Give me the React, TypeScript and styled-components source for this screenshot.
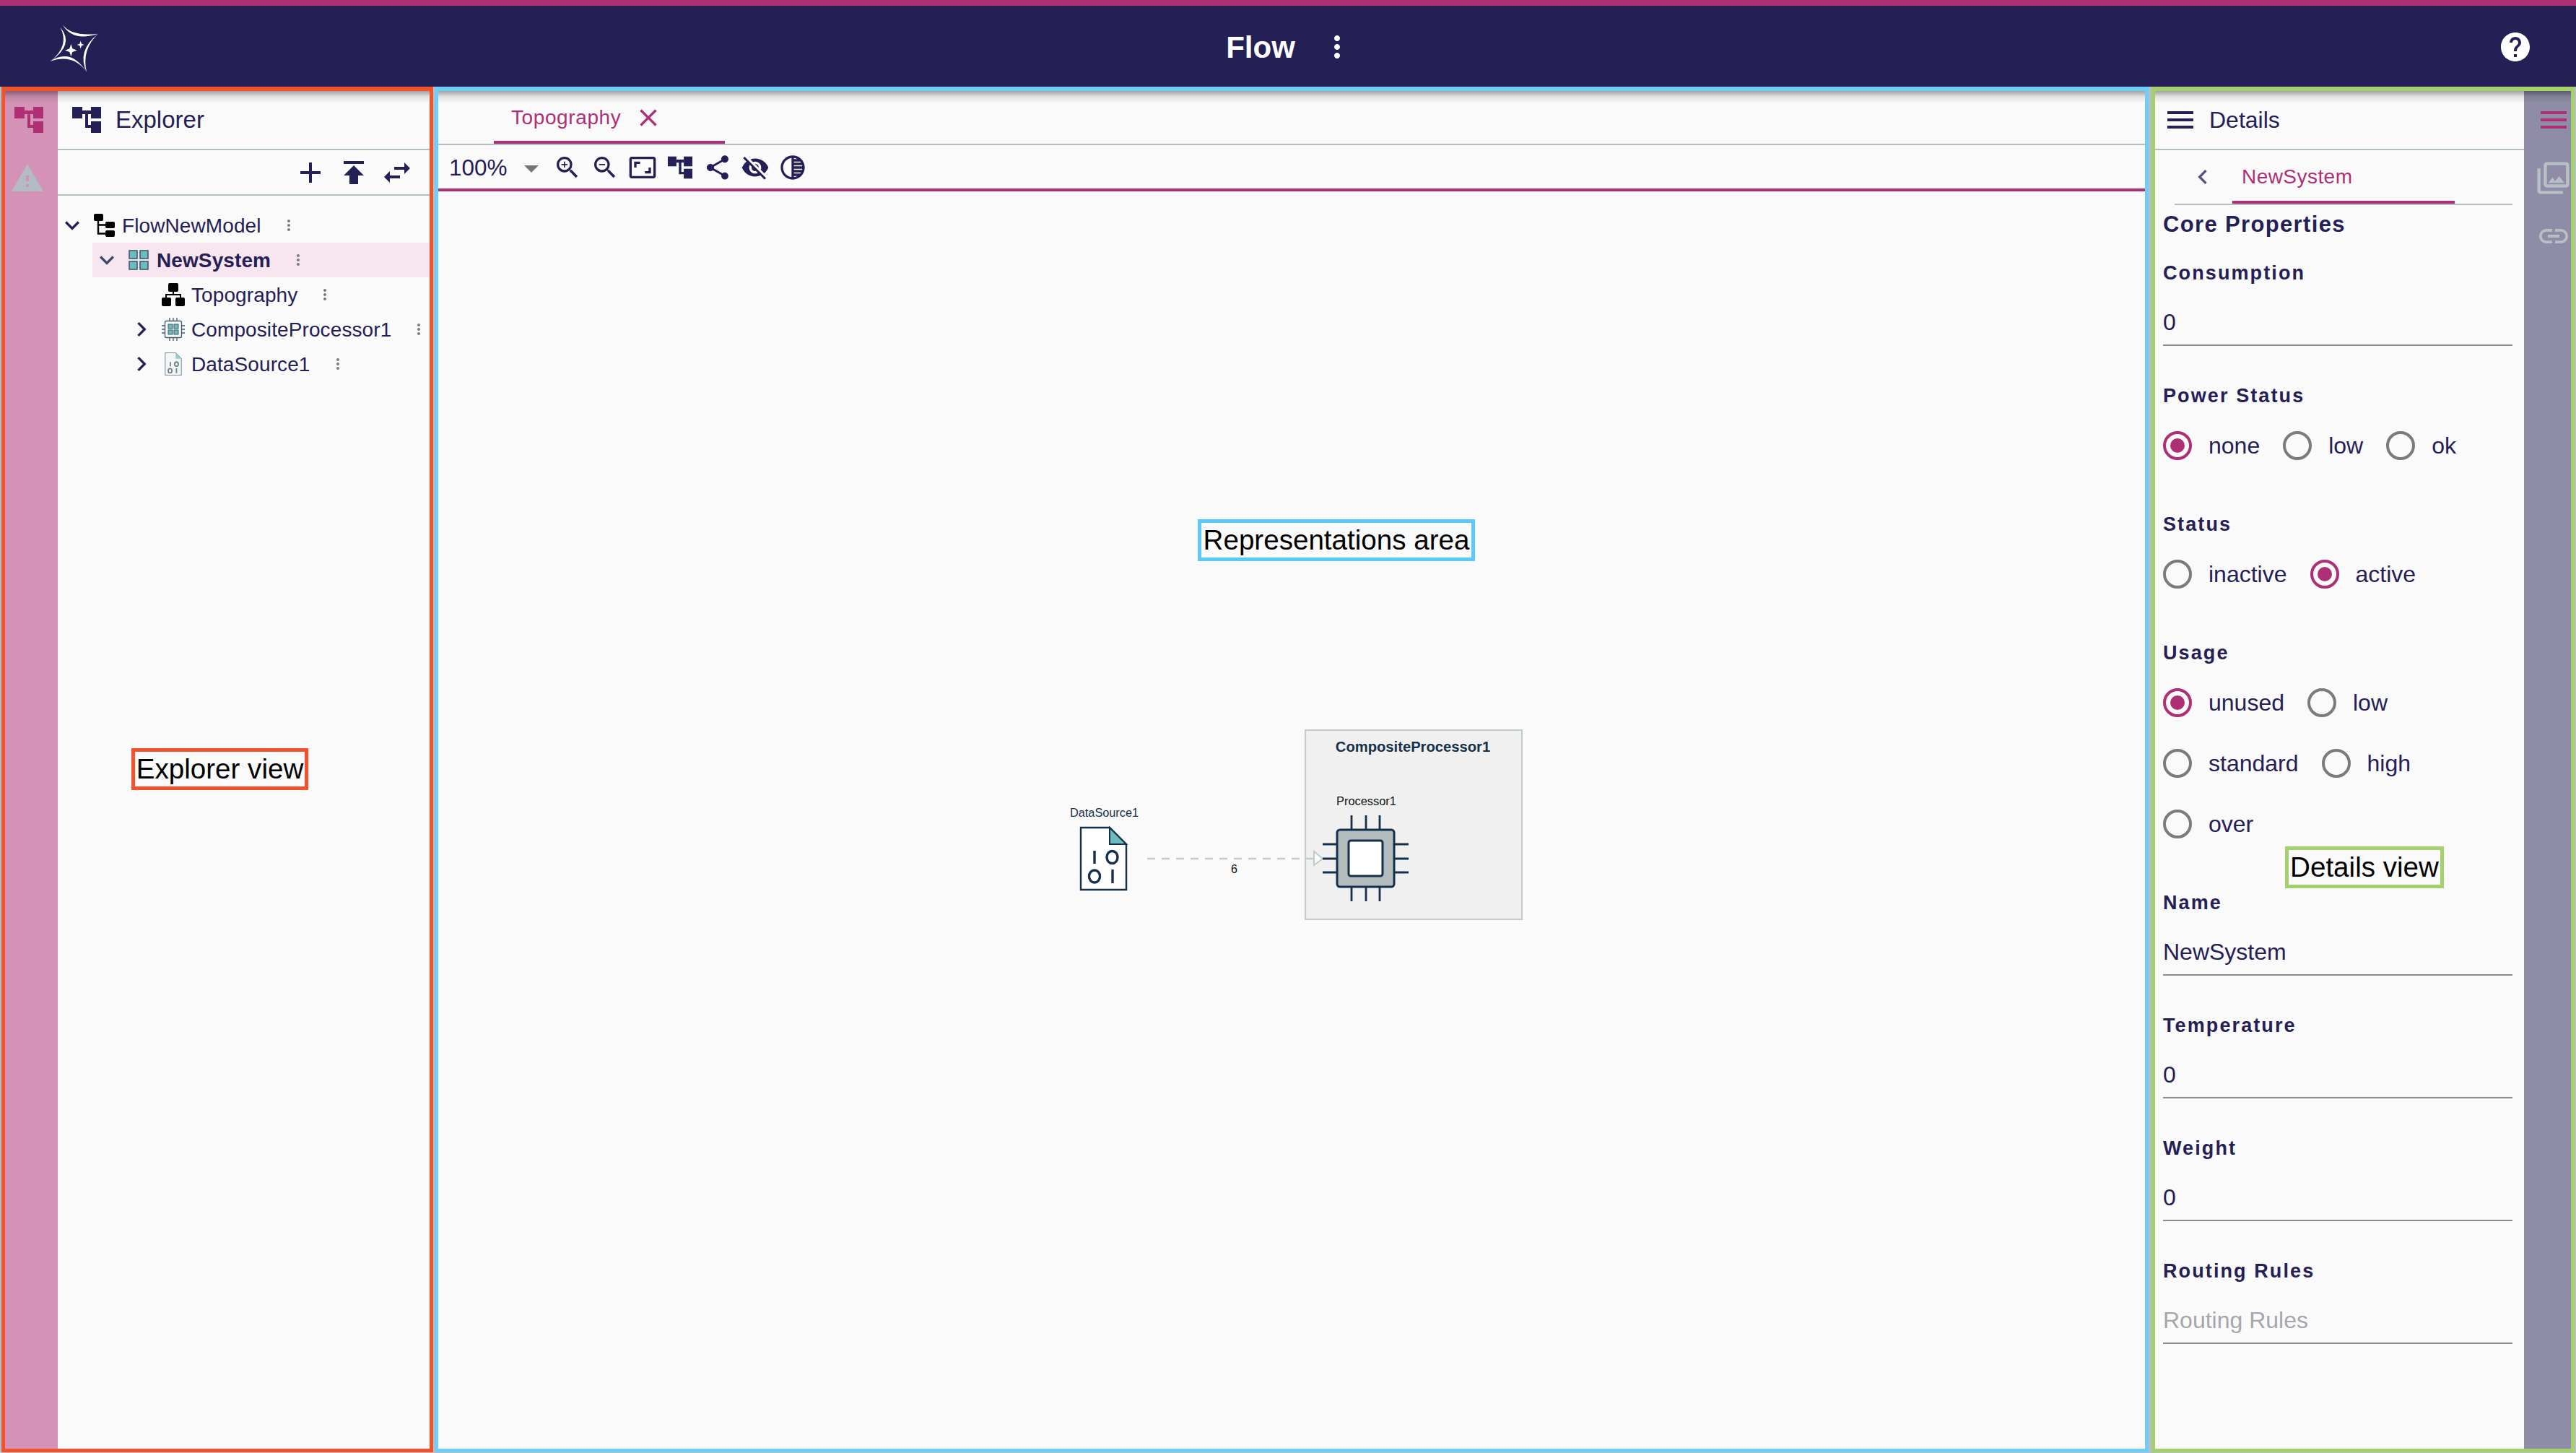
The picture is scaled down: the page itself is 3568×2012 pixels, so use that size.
import React from "react";
import styled, { createGlobalStyle } from "styled-components";
import {
  MdAdd, MdPublish, MdSwapHoriz, MdMoreVert, MdExpandMore, MdChevronRight, MdChevronLeft, MdClose,
  MdZoomIn, MdZoomOut, MdAspectRatio, MdShare, MdVisibilityOff, MdTonality, MdMenu, MdHelp, MdWarning,
  MdOutlinePhotoLibrary, MdLink,
} from "react-icons/md";

const NAVY = "#242056";
const MAGENTA = "#ae2f75";
const LINE = "#b3bfc1";
const PAPER = "#fafafa";

const Global = createGlobalStyle`
  html, body { margin: 0; padding: 0; width: 3568px; height: 2012px; overflow: hidden; background: ${PAPER}; }
  body { font-family: "Liberation Sans", Arial, sans-serif; color: ${NAVY}; }
  * { box-sizing: border-box; }
`;

const Page = styled.div`
  position: relative; width: 3568px; height: 2012px; display: flex; flex-direction: column;
`;
const AppBar = styled.header`
  height: 120px; flex: none; background: ${NAVY}; border-top: 8px solid #ae3074;
  display: grid; grid-template-columns: 1fr auto 1fr; align-items: center; padding: 0 60px; color: #fff;
`;
const LogoBox = styled.div`display: flex; margin-top: 12px;`;
const TitleGroup = styled.div`display: flex; align-items: center; gap: 34px; margin-left: 6px; padding-top: 2px;`;
const AppTitle = styled.span`font-size: 42px; font-weight: 700; line-height: 48px; padding-top: 2px;`;
const HelpBox = styled.div`justify-self: end; display: flex; padding-top: 2px;`;

const Main = styled.main`
  flex: 1; display: flex; background: #b8bfc2; padding: 0 2px 1px 2px; min-height: 0;
`;
const Panel = styled.section<{ $color: string; $width: number; $gap?: number }>`
  position: relative; width: ${(p) => p.$width}px; flex: none; margin-right: ${(p) => p.$gap ?? 0}px;
  display: flex; background: ${PAPER};
  border: 5px solid ${(p) => p.$color}; border-top-width: 6px;
  &::before {
    content: ""; position: absolute; left: 0; right: 0; top: 0; height: 17px; pointer-events: none; z-index: 2;
    background: linear-gradient(to bottom, rgba(0,0,0,.36), rgba(0,0,0,.1) 45%, rgba(0,0,0,0));
  }
`;
const LeftRail = styled.nav`
  width: 73px; flex: none; background: #d392b6; display: flex; flex-direction: column; align-items: center;
  padding: 22px 7px 0 0; gap: 39px;
`;
const RailWarning = styled.div`display: flex; margin-left: -4px; color: #b3bcc3;`;
const RightRail = styled.nav`
  width: 65px; flex: none; background: #8f8ca8; display: flex; flex-direction: column; align-items: center;
  padding: 16px 0 0 16px; gap: 30px; color: #b7c0c4;
`;
const PanelBody = styled.div`flex: 1; min-width: 0; display: flex; flex-direction: column;`;
const PanelHeader = styled.div<{ $pad: number; $gap: number; $size: number }>`
  height: 82px; flex: none; display: flex; align-items: center; border-bottom: 2px solid ${LINE};
  padding-left: ${(p) => p.$pad}px; gap: ${(p) => p.$gap}px; font-size: ${(p) => p.$size}px;
`;
const ExplorerTools = styled.div`
  height: 63px; flex: none; display: flex; align-items: center; justify-content: flex-end; gap: 12px;
  padding-right: 21px; border-bottom: 2px solid ${LINE};
`;
const Tree = styled.div`padding-top: 17px; display: flex; flex-direction: column;`;
const TreeRow = styled.div<{ $level: number; $selected?: boolean }>`
  height: 48px; display: flex; align-items: center; font-size: 28px; letter-spacing: 0.1px;
  margin-left: ${(p) => p.$level * 48}px; white-space: nowrap;
  background: ${(p) => (p.$selected ? "#f7e6f0" : "transparent")};
  font-weight: ${(p) => (p.$selected ? 700 : 400)};
`;
const Toggle = styled.span<{ $muted?: boolean }>`
  width: 40px; height: 40px; flex: none; display: flex; color: ${(p) => (p.$muted ? "#3b4a6b" : NAVY)};
`;
const TreeIcon = styled.span`width: 48px; flex: none; display: flex; justify-content: center; align-items: center;`;
const TreeLabel = styled.span`margin-left: 1px; padding-top: 2px;`;
const RowMenu = styled.span`display: flex; margin-left: 26px; color: #7a7a7a;`;

const Center = styled.div`flex: 1; min-width: 0; display: flex; flex-direction: column;`;
const TabBar = styled.div`
  height: 75px; flex: none; padding-left: 77px; border-bottom: 2px solid ${LINE}; display: flex;
`;
const EditorTab = styled.div`
  width: 320px; height: 73px; padding: 5px 0 0 24px; border-bottom: 4px solid ${MAGENTA};
  display: flex; align-items: center; gap: 18px; color: ${MAGENTA}; font-size: 28px; letter-spacing: 0.6px;
`;
const DiagramTools = styled.div`
  height: 64px; flex: none; display: flex; align-items: center; padding: 2px 0 0 15px;
  border-bottom: 4px solid ${MAGENTA}; color: ${NAVY};
`;
const Zoom = styled.span`font-size: 31.5px; width: 80px;`;
const Caret = styled.span`
  width: 0; height: 0; margin: 4px 20px 0 24px; border-left: 10px solid transparent; border-right: 10px solid transparent;
  border-top: 10px solid #757575;
`;
const ToolIcons = styled.div`display: flex; gap: 12px; align-items: center;`;
const ToolIcon = styled.span`width: 40px; height: 40px; display: flex; align-items: center; justify-content: center;`;
const Canvas = styled.div`position: relative; flex: 1;`;
const Diagram = styled.svg`position: absolute; left: 863px; top: 735px;`;
const DiagramText = styled.text<{ $bold?: boolean; $size: number; $fill: string }>`
  font-family: "Liberation Sans", Arial, sans-serif; font-size: ${(p) => p.$size}px;
  font-weight: ${(p) => (p.$bold ? 700 : 400)}; fill: ${(p) => p.$fill};
`;

const DetailTabs = styled.div`
  height: 76px; flex: none; margin: 0 16px 0 27px; padding-left: 19px; border-bottom: 2px solid ${LINE};
  display: flex; align-items: flex-start;
`;
const BackIcon = styled.span`display: flex; color: #55527f; margin-top: 17px;`;
const DetailTab = styled.div`
  width: 308px; height: 74px; margin-left: 21px; padding: 4px 0 0 13px; border-bottom: 4px solid ${MAGENTA};
  display: flex; align-items: center; color: ${MAGENTA}; font-size: 28px; letter-spacing: 0.45px;
`;
const Form = styled.div`padding: 6px 16px 0 11px; display: flex; flex-direction: column;`;
const SectionTitle = styled.h2`
  margin: 0 0 28px; padding-top: 1px; height: 40px; font-size: 31px; line-height: 40px; font-weight: 700; letter-spacing: 1.35px;
`;
const FieldLabel = styled.div`font-size: 27px; line-height: 40px; font-weight: 700; letter-spacing: 2.1px;`;
const TextField = styled.div`margin-bottom: 49px;`;
const TextValue = styled.div<{ $placeholder?: boolean }>`
  padding: 28px 0 11px; font-size: 32px; line-height: 40px; border-bottom: 2px solid #8c8c8c;
  color: ${(p) => (p.$placeholder ? "#a6a6ad" : NAVY)};
`;
const RadioField = styled.div`margin-bottom: 69px;`;
const RadioGroup = styled.div`display: flex; flex-wrap: wrap; column-gap: 32px; row-gap: 44px; margin-top: 29px;`;
const RadioOption = styled.div`display: flex; align-items: center; gap: 23px; font-size: 32px; height: 40px;`;
const RadioMark = styled.span<{ $on?: boolean }>`
  width: 40px; height: 40px; border-radius: 50%; flex: none; display: flex; align-items: center; justify-content: center;
  border: 4.5px solid ${(p) => (p.$on ? MAGENTA : "#7b7b7b")};
  &::after { content: ""; width: 20px; height: 20px; border-radius: 50%; background: ${(p) => (p.$on ? MAGENTA : "transparent")}; }
`;

const Callout = styled.div<{ $color: string; $left: number; $top: number; $width: number }>`
  position: absolute; left: ${(p) => p.$left}px; top: ${(p) => p.$top}px; width: ${(p) => p.$width}px; height: 58px;
  border: 5px solid ${(p) => p.$color}; background: ${PAPER}; color: #000; font-size: 38.6px; line-height: 47px;
  text-align: center; white-space: nowrap; z-index: 3;
`;

const Logo = () => (
  <svg width="90" height="90" viewBox="0 0 270 270" fill="#fff">
    <path d="M80 28 Q118 78 228 65 Q122 100 80 28Z" />
    <path d="M228 65 Q158 130 180 225 Q138 135 228 65Z" />
    <path d="M180 225 Q125 146 28 180 Q115 122 180 225Z" />
    <path d="M28 180 Q112 115 70 38 Q132 110 28 180Z" />
    <path d="M115 108 L121 127 L140 134 L121 141 L115 160 L109 141 L90 134 L109 127Z" />
    <path d="M155 95 L159 107 L170 111 L159 115 L155 127 L151 115 L140 111 L151 107Z" />
  </svg>
);

const StructureIcon = ({ color, width = 40, height = 36 }: { color: string; width?: number; height?: number }) => (
  <svg width={width} height={height} viewBox="0 0 40 36" fill={color}>
    <rect x="0" y="0" width="14" height="16" />
    <rect x="26" y="0" width="14" height="16" />
    <rect x="26" y="20" width="14" height="16" />
    <rect x="14" y="5" width="12" height="5" />
    <path d="M18 8h4v17h5v4h-9z" />
  </svg>
);

const ModelIcon = () => (
  <svg width="29" height="32" viewBox="0 0 29 32">
    <g fill="#000">
      <rect x="0" y="0" width="13" height="10" rx="2" />
      <rect x="16" y="11" width="13" height="9" rx="2" />
      <rect x="16" y="23" width="13" height="9" rx="2" />
    </g>
    <path d="M6 9V27.5H17M6 15.5H17" stroke="#000" strokeWidth="2.4" fill="none" />
  </svg>
);

const SystemIcon = () => (
  <svg width="28" height="28" viewBox="0 0 28 28" fill="#6cbcbc" stroke="#3f5b72" strokeWidth="1.6">
    <rect x="1" y="1" width="11" height="11" />
    <rect x="16" y="1" width="11" height="11" />
    <rect x="1" y="16" width="11" height="11" />
    <rect x="16" y="16" width="11" height="11" />
  </svg>
);

const TopographyIcon = () => (
  <svg width="32" height="32" viewBox="0 0 32 32" fill="#000">
    <rect x="9" y="0" width="14" height="12" rx="2" />
    <rect x="0" y="20" width="13" height="12" rx="2" />
    <rect x="19" y="20" width="13" height="12" rx="2" />
    <path d="M15 11h2v4h10v6h-2v-4H7v4H5v-6h10z" />
  </svg>
);

const ChipTreeIcon = () => (
  <svg width="32" height="32" viewBox="0 0 32 32" fill="none" stroke="#3f5b72" strokeWidth="1.3">
    <rect x="4.5" y="4.5" width="23" height="23" rx="2" fill="#fafafa" />
    <path d="M11 0v4.5M16 0v4.5M21 0v4.5M11 27.5v4.5M16 27.5v4.5M21 27.5v4.5M0 11h4.5M0 16h4.5M0 21h4.5M27.5 11h4.5M27.5 16h4.5M27.5 21h4.5" />
    <g fill="#6cbcbc" strokeWidth="1">
      <rect x="9" y="9" width="6" height="6" />
      <rect x="17" y="9" width="6" height="6" />
      <rect x="9" y="17" width="6" height="6" />
      <rect x="17" y="17" width="6" height="6" />
    </g>
  </svg>
);

const SmallDocIcon = () => (
  <svg width="24" height="32" viewBox="0 0 64 87">
    <g opacity="0.72">
      <path d="M1.5 1.5H41L62.5 24V85.5H1.5Z" fill="#f2f4f4" stroke="#546e7a" strokeWidth="3" />
      <path d="M41 1.5L62.5 24H41Z" fill="#6cbcbc" />
      <g stroke="#3f5566" strokeWidth="5" fill="none">
        <path d="M21 36V52M44 60V78" />
        <ellipse cx="44" cy="44" rx="7" ry="8" />
        <ellipse cx="20" cy="69" rx="7" ry="8" />
      </g>
    </g>
  </svg>
);

const FullDiagram = () => (
  <Diagram width="660" height="290" viewBox="1470 1000 660 290">
    <rect x="1808" y="1011" width="300" height="262" fill="#f0f0f0" stroke="#c3cccd" strokeWidth="2" />
    <DiagramText x="1957" y="1041" textAnchor="middle" $bold $size={20.2} $fill="#15304a">CompositeProcessor1</DiagramText>
    <DiagramText x="1851" y="1115" $size={16.4} $fill="#111">Processor1</DiagramText>
    <DiagramText x="1482" y="1131" $size={16.3} $fill="#15304a">DataSource1</DiagramText>
    <DiagramText x="1705" y="1209" $size={16} $fill="#111">6</DiagramText>

    <path d="M1497 1146H1537L1560 1169V1232H1497Z" fill="#fff" stroke="#15304a" strokeWidth="2.4" />
    <path d="M1537 1146L1560 1169H1537Z" fill="#6cbcbc" stroke="#15304a" strokeWidth="2" />
    <g stroke="#15304a" strokeWidth="3.4" fill="none">
      <path d="M1516 1178V1196M1541 1204V1223" />
      <ellipse cx="1540.5" cy="1187" rx="7.5" ry="8.5" />
      <ellipse cx="1516" cy="1213.5" rx="7.5" ry="8.5" />
    </g>

    <path d="M1589 1189H1820" stroke="#c3cccd" strokeWidth="2.4" strokeDasharray="11 9" fill="none" />
    <path d="M1820 1179L1832 1189L1820 1198Z" fill="#fafafa" stroke="#c3cccd" strokeWidth="2" />

    <path
      d="M1872 1129V1149M1892 1129V1149M1911 1129V1149M1872 1228V1248M1892 1228V1248M1911 1228V1248M1832 1169H1852M1832 1189H1852M1832 1208H1852M1931 1169H1951M1931 1189H1951M1931 1208H1951"
      stroke="#15304a" strokeWidth="2.8" fill="none"
    />
    <rect x="1852" y="1149" width="79" height="79" rx="4" fill="#b3bcbc" stroke="#15304a" strokeWidth="3" />
    <rect x="1868" y="1164" width="47" height="49" rx="3" fill="#fff" stroke="#15304a" strokeWidth="3" />
  </Diagram>
);

const Radio = ({ on, children }: { on?: boolean; children: React.ReactNode }) => (
  <RadioOption>
    <RadioMark $on={on} />
    {children}
  </RadioOption>
);

const Row = ({ level, toggle, icon, label, selected }: {
  level: number; toggle?: "open" | "closed"; icon: React.ReactNode; label: string; selected?: boolean;
}) => (
  <TreeRow $level={level} $selected={selected}>
    <Toggle $muted={selected}>
      {toggle === "open" && <MdExpandMore size={40} />}
      {toggle === "closed" && <MdChevronRight size={40} />}
    </Toggle>
    <TreeIcon>{icon}</TreeIcon>
    <TreeLabel>{label}</TreeLabel>
    <RowMenu><MdMoreVert size={24} /></RowMenu>
  </TreeRow>
);

function RailMenu() {
  return <MdMenu size={48} color={MAGENTA} />;
}

export default function App() {
  return (
    <Page>
      <Global />
      <AppBar>
        <LogoBox><Logo /></LogoBox>
        <TitleGroup>
          <AppTitle>Flow</AppTitle>
          <MdMoreVert size={48} />
        </TitleGroup>
        <HelpBox><MdHelp size={48} /></HelpBox>
      </AppBar>
      <Main>
        <Panel $color="#f0532d" $width={598} $gap={2}>
          <LeftRail>
            <StructureIcon color={MAGENTA} />
            <RailWarning><MdWarning size={48} /></RailWarning>
          </LeftRail>
          <PanelBody>
            <PanelHeader $pad={20} $gap={20} $size={33}>
              <StructureIcon color={NAVY} />
              Explorer
            </PanelHeader>
            <ExplorerTools>
              <MdAdd size={48} />
              <MdPublish size={48} />
              <MdSwapHoriz size={48} />
            </ExplorerTools>
            <Tree>
              <Row level={0} toggle="open" icon={<ModelIcon />} label="FlowNewModel" />
              <Row level={1} toggle="open" icon={<SystemIcon />} label="NewSystem" selected />
              <Row level={2} icon={<TopographyIcon />} label="Topography" />
              <Row level={2} toggle="closed" icon={<ChipTreeIcon />} label="CompositeProcessor1" />
              <Row level={2} toggle="closed" icon={<SmallDocIcon />} label="DataSource1" />
            </Tree>
          </PanelBody>
        </Panel>

        <Panel $color="#6fcdf7" $width={2374} $gap={4}>
          <Center>
            <TabBar>
              <EditorTab>
                Topography
                <MdClose size={40} />
              </EditorTab>
            </TabBar>
            <DiagramTools>
              <Zoom>100%</Zoom>
              <Caret />
              <ToolIcons>
                <ToolIcon><MdZoomIn size={40} /></ToolIcon>
                <ToolIcon><MdZoomOut size={40} /></ToolIcon>
                <ToolIcon><MdAspectRatio size={40} /></ToolIcon>
                <ToolIcon><StructureIcon color={NAVY} width={34} height={32} /></ToolIcon>
                <ToolIcon><MdShare size={40} /></ToolIcon>
                <ToolIcon><MdVisibilityOff size={40} /></ToolIcon>
                <ToolIcon><MdTonality size={40} /></ToolIcon>
              </ToolIcons>
            </DiagramTools>
            <Canvas><FullDiagram /></Canvas>
          </Center>
        </Panel>

        <Panel $color="#a5d06e" $width={586}>
          <PanelBody>
            <PanelHeader $pad={11} $gap={16} $size={32}>
              <MdMenu size={48} />
              Details
            </PanelHeader>
            <DetailTabs>
              <BackIcon><MdChevronLeft size={40} /></BackIcon>
              <DetailTab>NewSystem</DetailTab>
            </DetailTabs>
            <Form>
              <SectionTitle>Core Properties</SectionTitle>
              <TextField>
                <FieldLabel>Consumption</FieldLabel>
                <TextValue>0</TextValue>
              </TextField>
              <RadioField>
                <FieldLabel>Power Status</FieldLabel>
                <RadioGroup>
                  <Radio on>none</Radio>
                  <Radio>low</Radio>
                  <Radio>ok</Radio>
                </RadioGroup>
              </RadioField>
              <RadioField>
                <FieldLabel>Status</FieldLabel>
                <RadioGroup>
                  <Radio>inactive</Radio>
                  <Radio on>active</Radio>
                </RadioGroup>
              </RadioField>
              <RadioField>
                <FieldLabel>Usage</FieldLabel>
                <RadioGroup>
                  <Radio on>unused</Radio>
                  <Radio>low</Radio>
                  <Radio>standard</Radio>
                  <Radio>high</Radio>
                  <Radio>over</Radio>
                </RadioGroup>
              </RadioField>
              <TextField>
                <FieldLabel>Name</FieldLabel>
                <TextValue>NewSystem</TextValue>
              </TextField>
              <TextField>
                <FieldLabel>Temperature</FieldLabel>
                <TextValue>0</TextValue>
              </TextField>
              <TextField>
                <FieldLabel>Weight</FieldLabel>
                <TextValue>0</TextValue>
              </TextField>
              <TextField>
                <FieldLabel>Routing Rules</FieldLabel>
                <TextValue $placeholder>Routing Rules</TextValue>
              </TextField>
            </Form>
          </PanelBody>
          <RightRail>
            <RailMenu />
            <MdOutlinePhotoLibrary size={53} />
            <MdLink size={48} />
          </RightRail>
        </Panel>
      </Main>
      <Callout $color="#f0532d" $left={182} $top={1036} $width={245}>Explorer view</Callout>
      <Callout $color="#5cc8fb" $left={1659} $top={719} $width={384}>Representations area</Callout>
      <Callout $color="#a5d06e" $left={3165} $top={1172} $width={220}>Details view</Callout>
    </Page>
  );
}
